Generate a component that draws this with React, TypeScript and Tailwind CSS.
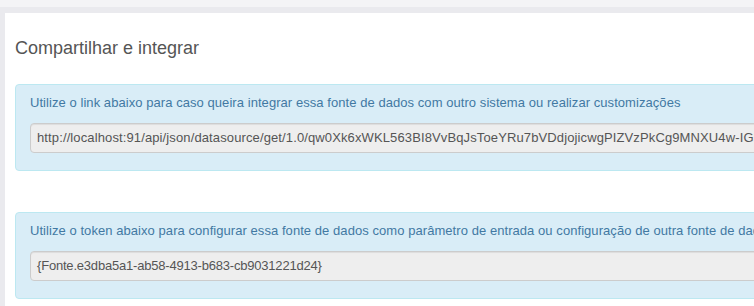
import React from "react";

const font = { fontFamily: '"Liberation Sans", Arial, sans-serif' };

interface ShareBoxProps {
  label: string;
  value: string;
  valueClass: string;
}

const ShareBox = ({ label, value, valueClass }: ShareBoxProps) => {
  return (
    <div className="rounded-[4px] border border-[#bce8f1] bg-[#d9edf7] pl-[14px] pt-[9px] pb-[17px]">
      <p className="whitespace-nowrap text-[13px] leading-[18px] tracking-[0.06px] text-[#4279a3]">{label}</p>
      <div
        className={`mt-[11px] flex h-[30px] items-center overflow-hidden whitespace-nowrap rounded-[4px] border border-[#cccccc] bg-[#eeeeee] pl-[6px] text-[13px] text-[#555555] shadow-[inset_0_1px_1px_rgba(0,0,0,0.075)] ${valueClass}`}
      >
        {value}
      </div>
    </div>
  );
};

export default function App() {
  return (
    <div className="h-[306px] w-[754px] overflow-hidden bg-[#f4f4f6]" style={font}>
      <div className="mt-[7px] h-full bg-[#eaeaee] pl-[5px] pt-[6px]">
        <div className="h-full w-[1000px] bg-white px-[10px] pt-[25px]">
          <h3 className="text-[18px] leading-[20px] text-[#555555]">Compartilhar e integrar</h3>

          {/* link */}
          <div className="mt-[26px]">
            <ShareBox
              label="Utilize o link abaixo para caso queira integrar essa fonte de dados com outro sistema ou realizar customizações"
              value="http://localhost:91/api/json/datasource/get/1.0/qw0Xk6xWKL563BI8VvBqJsToeYRu7bVDdjojicwgPIZVzPkCg9MNXU4w-IGkZ0Zb"
              valueClass="tracking-[0.12px]"
            />
          </div>

          {/* token */}
          <div className="mt-[41px]">
            <ShareBox
              label="Utilize o token abaixo para configurar essa fonte de dados como parâmetro de entrada ou configuração de outra fonte de dados"
              value="{Fonte.e3dba5a1-ab58-4913-b683-cb9031221d24}"
              valueClass="tracking-[-0.2px]"
            />
          </div>
        </div>
      </div>
    </div>
  );
}
